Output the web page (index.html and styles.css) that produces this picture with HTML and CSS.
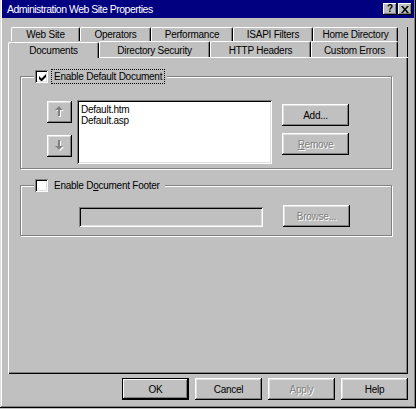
FILE: index.html
```html
<!DOCTYPE html>
<html>
<head>
<meta charset="utf-8">
<link rel="stylesheet" href="styles.css">
</head>
<body>
<div class="window">
  <div class="titlebar">
    <span class="title">Administration Web Site Properties</span>
    <div class="caption-btns">
      <span class="cbtn help">?</span>
      <span class="cbtn close"><svg width="8" height="7" viewBox="0 0 8 7"><path d="M0 0h2l2 2.5L6 0h2L5 3.5 8 7H6L4 4.5 2 7H0l3-3.5z" fill="#000"/></svg></span>
    </div>
  </div>

  <div class="tabs">
    <div class="tabrow back">
      <div class="tab t-web">Web Site</div>
      <div class="tab t-ops">Operators</div>
      <div class="tab t-perf">Performance</div>
      <div class="tab t-isapi">ISAPI Filters</div>
      <div class="tab t-home">Home Directory</div>
      <div class="tab-fill"></div>
    </div>
    <div class="tabrow front">
      <div class="tab t-docs selected">Documents</div>
      <div class="tab t-dirsec">Directory Security</div>
      <div class="tab t-http">HTTP Headers</div>
      <div class="tab t-custom">Custom Errors</div>
      <div class="tab-fill"></div>
    </div>
  </div>

  <div class="panel">
    <div class="group g-default">
      <div class="legend">
        <span class="checkbox checked"><svg width="7" height="7" viewBox="0 0 7 7"><path d="M0 2v3l2 2h1l4-4V0L2.5 4.5z" fill="#000"/></svg></span>
        <span class="legend-text focus">Enable Default Document</span>
      </div>
      <div class="group-row row-default">
        <div class="arrows">
          <div class="btn arrow-btn"><svg width="9" height="12" viewBox="0 0 9 12"><path d="M5 1L1 5h3v6h2V5h3z" fill="#fff"/><path d="M4 0L0 4h3v6h2V4h3z" fill="#808080"/></svg></div>
          <div class="btn arrow-btn"><svg width="9" height="12" viewBox="0 0 9 12"><path d="M5 11L1 7h3V1h2v6h3z" fill="#fff"/><path d="M4 10L0 6h3V0h2v6h3z" fill="#808080"/></svg></div>
        </div>
        <div class="listbox">
          <div class="item">Default.htm</div>
          <div class="item">Default.asp</div>
        </div>
        <div class="side-btns">
          <div class="btn side-btn">Add...</div>
          <div class="btn side-btn disabled"><u>R</u>emove</div>
        </div>
      </div>
    </div>

    <div class="group g-footer">
      <div class="legend">
        <span class="checkbox"></span>
        <span class="legend-text">Enable D<u>o</u>cument Footer</span>
      </div>
      <div class="group-row row-footer">
        <div class="textfield"></div>
        <div class="btn side-btn disabled">Browse...</div>
      </div>
    </div>
  </div>

  <div class="buttons">
    <div class="btn dlg-btn default">OK</div>
    <div class="btn dlg-btn">Cancel</div>
    <div class="btn dlg-btn disabled">Apply</div>
    <div class="btn dlg-btn">Help</div>
  </div>
</div>
</body>
</html>
```

FILE: styles.css
```css
* { box-sizing: border-box; }

html, body {
  margin: 0;
  padding: 0;
  background: #c0c0c0;
}

body {
  font-family: "Liberation Sans", Arial, sans-serif;
  font-size: 10px;
  letter-spacing: -0.25px;
  color: #000;
  width: 416px;
  height: 409px;
  overflow: hidden;
}

.window {
  width: 416px;
  height: 408px;
  background: #c0c0c0;
  box-shadow: inset -1px -1px 0 #000, inset 1px 0 0 #dfdfdf, inset -2px -2px 0 #808080, inset 2px 0 0 #fff;
  overflow: hidden;
}

/* Title bar */
.titlebar {
  margin: 0 2px 0 2px;
  height: 18px;
  background: #000080;
  display: flex;
  align-items: center;
  justify-content: space-between;
  padding: 0 0 0 5px;
}

.title {
  color: #fff;
  font-size: 10.5px;
  letter-spacing: -0.5px;
  white-space: nowrap;
}

.caption-btns {
  display: flex;
  gap: 1px;
}

.cbtn {
  width: 14px;
  height: 12px;
  background: #c0c0c0;
  box-shadow: inset -1px -1px 0 #000, inset 1px 1px 0 #fff, inset -2px -2px 0 #808080;
  display: flex;
  align-items: center;
  justify-content: center;
  font-weight: bold;
  font-size: 10px;
  line-height: 1;
  letter-spacing: 0;
}

.cbtn.close { margin-right: 2px; }

/* Tabs */
.tabs {
  margin-top: 9px;
}

.tabrow {
  display: flex;
  white-space: nowrap;
}

.tabrow.back {
  margin-left: 11px;
  height: 14px;
}

.tabrow.front {
  margin-left: 8px;
  height: 16px;
  align-items: flex-end;
}

.tab {
  height: 100%;
  border-left: 1px solid #fff;
  border-top: 1px solid #fff;
  border-right: 1px solid #000;
  border-top-left-radius: 2px;
  border-top-right-radius: 2px;
  box-shadow: inset -1px 0 0 #808080;
  background: #c0c0c0;
  display: flex;
  align-items: center;
  justify-content: center;
  padding-bottom: 1px;
}

.tabrow.front .tab { height: 16px; padding-top: 2px; }

.tab.selected {
  height: 19px;
  margin-bottom: -1px;
  position: relative;
  z-index: 1;
  padding-top: 0;
  padding-bottom: 2px;
}

.tab-fill {
  flex: 1;
  height: 100%;
  border-right: 1px solid #000;
  margin-right: 8px;
}

.t-web { width: 69px; }
.t-ops { width: 71px; }
.t-perf { width: 82px; }
.t-isapi { width: 80px; }
.t-home { width: 85px; }

.t-docs { width: 91px; }
.t-dirsec { width: 111px; }
.t-http { width: 101px; }
.t-custom { width: 87px; }

/* Panel */
.panel {
  margin-left: 8px;
  width: 400px;
  height: 317px;
  padding: 19px 0 0 12px;
  box-shadow: inset 1px 1px 0 #fff, inset -1px -1px 0 #000, inset -2px -2px 0 #808080;
}

.group {
  width: 372px;
  border: 1px solid #808080;
  box-shadow: 1px 1px 0 #fff, inset 1px 1px 0 #fff;
}

.g-default { height: 93px; }
.g-footer { height: 51px; margin-top: 16px; }

.legend {
  display: inline-flex;
  align-items: center;
  height: 15px;
  margin: -8px 0 0 13px;
  padding: 0 2px 0 1px;
  background: #c0c0c0;
  vertical-align: top;
}

.checkbox {
  width: 13px;
  height: 13px;
  background: #fff;
  box-shadow: inset 1px 1px 0 #808080, inset -1px -1px 0 #fff, inset 2px 2px 0 #000, inset -2px -2px 0 #dfdfdf;
  display: flex;
  align-items: center;
  justify-content: center;
  margin-right: 3px;
}

.checkbox svg { margin: 1px 0 0 1px; }

.legend-text {
  padding: 1px 2px;
  border: 1px dotted transparent;
  white-space: nowrap;
}

.legend-text.focus { border-color: #000; }

.group-row {
  display: flex;
  align-items: flex-start;
}

.row-default {
  margin-top: 12px;
  padding-left: 26px;
}

.arrows {
  display: flex;
  flex-direction: column;
  gap: 12px;
  margin-top: 1px;
}

.btn {
  background: #c0c0c0;
  box-shadow: inset -1px -1px 0 #000, inset 1px 1px 0 #fff, inset -2px -2px 0 #808080, inset 2px 2px 0 #dfdfdf;
  display: flex;
  align-items: center;
  justify-content: center;
  white-space: nowrap;
}

.arrow-btn {
  width: 25px;
  height: 22px;
}

.listbox {
  width: 195px;
  height: 64px;
  margin-left: 5px;
  background: #fff;
  box-shadow: inset 1px 1px 0 #808080, inset -1px -1px 0 #fff, inset 2px 2px 0 #000, inset -2px -2px 0 #dfdfdf;
  padding: 4px 0 0 4px;
}

.item {
  height: 11px;
  line-height: 11px;
}

.side-btns {
  display: flex;
  flex-direction: column;
  gap: 7px;
  margin: 4px 0 0 10px;
}

.side-btn {
  width: 67px;
  height: 22px;
}

.disabled {
  color: #808080;
  text-shadow: 1px 1px 0 #fff;
}

.row-footer {
  margin-top: 8px;
  padding-left: 58px;
  gap: 20px;
}

.textfield {
  width: 184px;
  height: 20px;
  margin-top: 2px;
  background: #c0c0c0;
  box-shadow: inset 1px 1px 0 #808080, inset -1px -1px 0 #fff, inset 2px 2px 0 #000, inset -2px -2px 0 #dfdfdf;
}

/* Bottom buttons */
.buttons {
  display: flex;
  gap: 6px;
  margin: 4px 0 0 122px;
}

.dlg-btn {
  width: 67px;
  height: 22px;
}

.dlg-btn.default {
  box-shadow: inset 0 0 0 1px #000, inset -2px -2px 0 #000, inset 2px 2px 0 #fff, inset -3px -3px 0 #808080;
}
```
